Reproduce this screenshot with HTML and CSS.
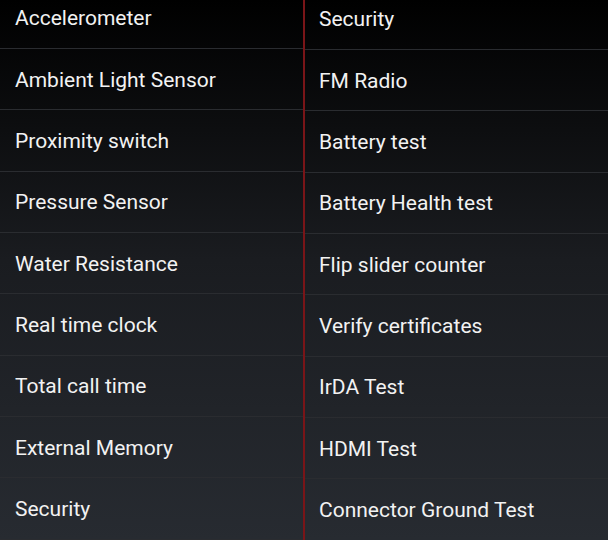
FILE: index.html
```html
<!DOCTYPE html>
<html>
<head>
<meta charset="utf-8">
<link rel="stylesheet" href="styles.css">
</head>
<body>
<div class="screen">
  <ul class="list list-left">
    <li class="item">Accelerometer</li>
    <li class="item">Ambient Light Sensor</li>
    <li class="item">Proximity switch</li>
    <li class="item">Pressure Sensor</li>
    <li class="item">Water Resistance</li>
    <li class="item">Real time clock</li>
    <li class="item">Total call time</li>
    <li class="item">External Memory</li>
    <li class="item">Security</li>
  </ul>
  <div class="divider"></div>
  <ul class="list list-right">
    <li class="item">Security</li>
    <li class="item">FM Radio</li>
    <li class="item">Battery test</li>
    <li class="item">Battery Health test</li>
    <li class="item">Flip slider counter</li>
    <li class="item">Verify certificates</li>
    <li class="item">IrDA Test</li>
    <li class="item">HDMI Test</li>
    <li class="item">Connector Ground Test</li>
  </ul>
</div>
</body>
</html>
```

FILE: styles.css
```css
html, body {
  margin: 0;
  padding: 0;
}
body {
  width: 608px;
  height: 540px;
  overflow: hidden;
  background: linear-gradient(to bottom, #000000 0px, #1a1c20 260px, #272b31 540px);
  font-family: Roboto, "Noto Sans", sans-serif;
}
.screen {
  display: grid;
  grid-template-columns: 303px 2px 303px;
  height: 540px;
  overflow: hidden;
}
.divider {
  background: #7a1518;
}
.list {
  list-style: none;
  margin: 0;
  padding: 0;
}
.list-left {
  margin-top: -12.33px;
}
.list-right {
  margin-top: -11.33px;
}
.item {
  height: 59.333px;
  padding-top: 1px;
  border-bottom: 1px solid #2a2c30;
  display: flex;
  align-items: center;
  padding-left: 15px;
  color: #f2f2f2;
  font-size: 21px;
  white-space: nowrap;
}
.list-right .item {
  padding-left: 14px;
}
```
